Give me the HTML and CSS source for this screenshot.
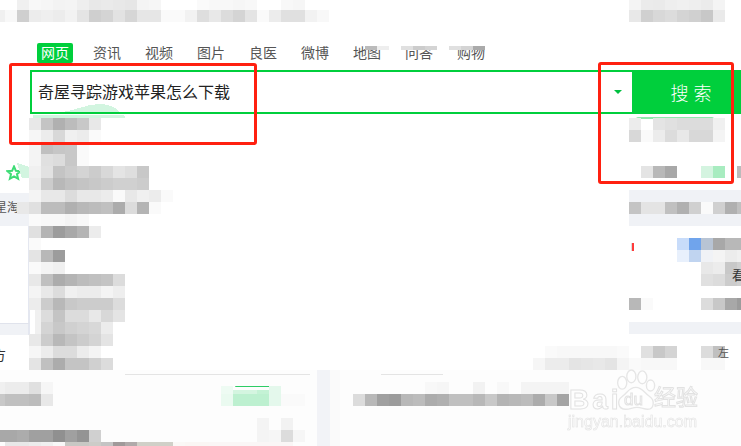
FILE: index.html
```html
<!DOCTYPE html>
<html lang="zh-CN">
<head>
  <meta charset="UTF-8">
  <title>搜索</title>
  <meta name="viewport" content="width=device-width, initial-scale=1.0">
  <link rel="stylesheet" href="styles.css">
</head>
<body>
  <div class="page">
    <nav class="tabs">
      <a class="tab active">网页</a>
      <a class="tab">资讯</a>
      <a class="tab">视频</a>
      <a class="tab">图片</a>
      <a class="tab">良医</a>
      <a class="tab">微博</a>
      <a class="tab">地图</a>
      <a class="tab">问答</a>
      <a class="tab">购物</a>
    </nav>

    <form class="search">
      <div class="query">奇屋寻踪游戏苹果怎么下载</div>
      <span class="caret"></span>
      <button class="go" type="button">搜 索</button>
    </form>

    <div class="content">
      <aside class="left">
        <svg class="star" width="16" height="16" viewBox="0 0 16 16">
          <path d="M8 1.5l1.9 4.3 4.6.4-3.5 3 1.1 4.6L8 11.4l-4.1 2.4L5 9.2l-3.5-3 4.6-.4z" fill="#fff" stroke="#3ddc75" stroke-width="2"/>
        </svg>
        <div class="strip tall">星淘</div>
        <div class="blank"></div>
        <div class="strip thin"></div>
        <div class="cut">方</div>
      </aside>
      <main class="middle"></main>
      <aside class="right">
        <div class="pill-line"></div>
        <div class="band tall"></div>
        <div class="mark"></div>
        <div class="band thin"></div>
      </aside>
    </div>

    <footer class="bottom">
      <div class="rules">
        <div class="rule first"></div>
        <div class="rule second"></div>
      </div>
      <div class="pill-line small"></div>
      <div class="column"></div>
    </footer>

    <!-- pixelated areas of the screenshot -->
    <svg class="mosaic" width="741" height="446" viewBox="0 0 741 446">
      <path d="M62 112C78 110 86 104 100 104C110 104 116 108 120 112z" fill="#d2f5e0"/>
      <path d="M33 114.500H124L125 118H33z" fill="#d2f5e0"/>
      <path d="M17 163L29 167V178L22 178z" fill="#d2f5e0"/>

      <rect class="low" x="365" y="46" fill="#bbb"/><rect class="low" x="377" y="46" fill="#eee"/>
      <rect class="low" x="401" y="46" fill="#e0e0e0"/><rect class="low" x="413" y="46" fill="#ccc"/><rect class="low" x="425" y="46" fill="#d4d4d4"/>
      <rect class="low" x="449" y="46" fill="#e0e0e0"/><rect class="low" x="461" y="46" fill="#d4d4d4"/><rect class="low" x="473" y="46" fill="#aaa"/>

      <rect x="17" y="-2" fill="#f0f0f0"/><rect x="29" y="-2" fill="#f8f8f8"/><rect x="41" y="-2" fill="#f6f6f6"/><rect x="53" y="-2" fill="#f3f3f3"/><rect x="65" y="-2" fill="#f4f4f4"/><rect x="77" y="-2" fill="#eee"/><rect x="89" y="-2" fill="#e8e8e8"/><rect x="101" y="-2" fill="#eaeaea"/><rect x="113" y="-2" fill="#e8e8e8"/><rect x="125" y="-2" fill="#e6e6e6"/><rect x="137" y="-2" fill="#f4f4f4"/><rect x="149" y="-2" fill="#f6f6f6"/><rect x="197" y="-2" fill="#fafafa"/><rect x="209" y="-2" fill="#f8f8f8"/><rect x="221" y="-2" fill="#f8f8f8"/><rect x="233" y="-2" fill="#f6f6f6"/><rect x="245" y="-2" fill="#f8f8f8"/><rect x="281" y="-2" fill="#f8f8f8"/><rect x="293" y="-2" fill="#f6f6f6"/>
      <rect x="-7" y="10" fill="#f0f0f0"/><rect x="5" y="10" fill="#f8f8f8"/><rect x="17" y="10" fill="#cfcfcf"/><rect x="29" y="10" fill="#ececec"/><rect x="41" y="10" fill="#efefef"/><rect x="53" y="10" fill="#ececec"/><rect x="65" y="10" fill="#f2f2f2"/><rect x="77" y="10" fill="#e4e4e4"/><rect x="89" y="10" fill="#cfcfcf"/><rect x="101" y="10" fill="#d4d4d4"/><rect x="113" y="10" fill="#e2e2e2"/><rect x="125" y="10" fill="#d6d6d6"/><rect x="137" y="10" fill="#e6e6e6"/><rect x="149" y="10" fill="#e6e6e6"/><rect x="161" y="10" fill="#fafafa"/><rect x="173" y="10" fill="#fafafa"/><rect x="185" y="10" fill="#f2f2f2"/><rect x="197" y="10" fill="#dedede"/><rect x="209" y="10" fill="#e8e8e8"/><rect x="221" y="10" fill="#dcdcdc"/><rect x="233" y="10" fill="#d4d4d4"/><rect x="245" y="10" fill="#e4e4e4"/><rect x="257" y="10" fill="#fafafa"/><rect x="269" y="10" fill="#ececec"/><rect x="281" y="10" fill="#e0e0e0"/><rect x="293" y="10" fill="#e0e0e0"/><rect x="305" y="10" fill="#f2f2f2"/><rect x="317" y="10" fill="#f8f8f8"/>
      <rect x="629" y="-2" fill="#f4f4f4"/><rect x="641" y="-2" fill="#ebebeb"/><rect x="653" y="-2" fill="#eaeaea"/><rect x="665" y="-2" fill="#eee"/><rect x="677" y="-2" fill="#f0f0f0"/><rect x="689" y="-2" fill="#eee"/><rect x="701" y="-2" fill="#ebebeb"/><rect x="713" y="-2" fill="#f4f4f4"/>
      <rect x="629" y="10" fill="#e8e8e8"/><rect x="641" y="10" fill="#d0d0d0"/><rect x="653" y="10" fill="#d8d8d8"/><rect x="665" y="10" fill="#dcdcdc"/><rect x="677" y="10" fill="#d4d4d4"/><rect x="689" y="10" fill="#d0d0d0"/><rect x="701" y="10" fill="#c8c8c8"/><rect x="713" y="10" fill="#eaeaea"/>

      <rect x="29" y="118" fill="#e8e8e8"/><rect x="41" y="118" fill="#c4c4c4"/><rect x="53" y="118" fill="#b0b0b0"/><rect x="65" y="118" fill="#bcbcbc"/><rect x="77" y="118" fill="#c8c8c8"/><rect x="89" y="118" fill="#e8e8e8"/>
      <rect x="29" y="130" fill="#f6f6f6"/><rect x="41" y="130" fill="#ececec"/><rect x="53" y="130" fill="#d8d8d8"/><rect x="65" y="130" fill="#f0f0f0"/><rect x="77" y="130" fill="#ececec"/><rect x="89" y="130" fill="#fafafa"/>
      <rect x="29" y="142" fill="#f4f4f4"/><rect x="41" y="142" fill="#c0c0c0"/><rect x="53" y="142" fill="#c6c6c6"/><rect x="65" y="142" fill="#c8c8c8"/><rect x="77" y="142" fill="#fafafa"/>
      <rect x="29" y="154" fill="#f4f4f4"/><rect x="41" y="154" fill="#e0e0e0"/><rect x="53" y="154" fill="#dcdcdc"/><rect x="65" y="154" fill="#c8c8c8"/><rect x="77" y="154" fill="#fafafa"/>
      <rect x="29" y="166" fill="#f0f0f0"/><rect x="41" y="166" fill="#e2e2e2"/><rect x="53" y="166" fill="#c4c4c4"/><rect x="65" y="166" fill="#ccc"/><rect x="77" y="166" fill="#d4d4d4"/><rect x="89" y="166" fill="#ccc"/><rect x="101" y="166" fill="#d8d8d8"/><rect x="113" y="166" fill="#e4e4e4"/><rect x="125" y="166" fill="#dedede"/><rect x="137" y="166" fill="#c8c8c8"/>
      <rect x="29" y="178" fill="#ececec"/><rect x="41" y="178" fill="#ccc"/><rect x="53" y="178" fill="#b8b8b8"/><rect x="65" y="178" fill="#c0c0c0"/><rect x="77" y="178" fill="#c4c4c4"/><rect x="89" y="178" fill="#c8c8c8"/><rect x="101" y="178" fill="#ccc"/><rect x="113" y="178" fill="#d0d0d0"/><rect x="125" y="178" fill="#d0d0d0"/><rect x="137" y="178" fill="#ccc"/>
      <rect x="29" y="190" fill="#f4f4f4"/><rect x="41" y="190" fill="#e8e8e8"/><rect x="53" y="190" fill="#e8e8e8"/><rect x="65" y="190" fill="#dcdcdc"/><rect x="77" y="190" fill="#e8e8e8"/><rect x="89" y="190" fill="#e8e8e8"/><rect x="101" y="190" fill="#ececec"/><rect x="113" y="190" fill="#fafafa"/><rect x="125" y="190" fill="#e8e8e8"/><rect x="137" y="190" fill="#f0f0f0"/><rect x="149" y="190" fill="#ececec"/><rect x="161" y="190" fill="#fafafa"/>
      <rect x="17" y="202" fill="#e8e8e8"/><rect x="29" y="202" fill="#e0e0e0"/><rect x="41" y="202" fill="#bcbcbc"/><rect x="53" y="202" fill="#bcbcbc"/><rect x="65" y="202" fill="#b0b0b0"/><rect x="77" y="202" fill="#b8b8b8"/><rect x="89" y="202" fill="#bcbcbc"/><rect x="101" y="202" fill="#c0c0c0"/><rect x="113" y="202" fill="#acacac"/><rect x="125" y="202" fill="#dcdcdc"/><rect x="137" y="202" fill="#b4b4b4"/><rect x="149" y="202" fill="#fafafa"/>
      <rect x="29" y="214" fill="#fafafa"/><rect x="41" y="214" fill="#f8f8f8"/><rect x="53" y="214" fill="#f8f8f8"/><rect x="65" y="214" fill="#f4f4f4"/><rect x="77" y="214" fill="#f8f8f8"/>
      <rect x="29" y="226" fill="#e0e0e0"/><rect x="41" y="226" fill="#b4b4b4"/><rect x="53" y="226" fill="#9c9c9c"/><rect x="65" y="226" fill="#a8a8a8"/><rect x="77" y="226" fill="#b4b4b4"/><rect x="89" y="226" fill="#ececec"/>
      <rect x="29" y="238" fill="#fafafa"/>
      <rect x="29" y="250" fill="#e4e4e4"/><rect x="41" y="250" fill="#b8b8b8"/><rect x="53" y="250" fill="#9c9c9c"/>
      <rect x="29" y="262" fill="#fafafa"/><rect x="41" y="262" fill="#f4f4f4"/><rect x="53" y="262" fill="#f0f0f0"/>
      <rect x="29" y="274" fill="#e8e8e8"/><rect x="41" y="274" fill="#c0c0c0"/><rect x="53" y="274" fill="#acacac"/><rect x="65" y="274" fill="#b4b4b4"/><rect x="77" y="274" fill="#bcbcbc"/><rect x="89" y="274" fill="#c0c0c0"/><rect x="101" y="274" fill="#c4c4c4"/><rect x="113" y="274" fill="#dcdcdc"/>
      <rect x="29" y="286" fill="#f4f4f4"/><rect x="41" y="286" fill="#e8e8e8"/><rect x="53" y="286" fill="#dcdcdc"/><rect x="65" y="286" fill="#f0f0f0"/><rect x="77" y="286" fill="#ececec"/><rect x="89" y="286" fill="#ececec"/><rect x="101" y="286" fill="#f4f4f4"/><rect x="113" y="286" fill="#eee"/>
      <rect x="29" y="298" fill="#ececec"/><rect x="41" y="298" fill="#ccc"/><rect x="53" y="298" fill="#b8b8b8"/><rect x="65" y="298" fill="#c8c8c8"/><rect x="77" y="298" fill="#ccc"/><rect x="89" y="298" fill="#ccc"/><rect x="101" y="298" fill="#ccc"/><rect x="113" y="298" fill="#dcdcdc"/>
      <rect x="35" y="310" fill="#f0f0f0"/><rect x="41" y="310" fill="#dcdcdc"/><rect x="53" y="310" fill="#c4c4c4"/><rect x="65" y="310" fill="#dcdcdc"/><rect x="77" y="310" fill="#dcdcdc"/><rect x="89" y="310" fill="#e8e8e8"/><rect x="101" y="310" fill="#d8d8d8"/><rect x="113" y="310" fill="#e4e4e4"/>
      <rect x="35" y="322" fill="#f0f0f0"/><rect x="41" y="322" fill="#d4d4d4"/><rect x="53" y="322" fill="#c8c8c8"/><rect x="65" y="322" fill="#d0d0d0"/><rect x="77" y="322" fill="#d4d4d4"/><rect x="89" y="322" fill="#d8d8d8"/><rect x="101" y="322" fill="#ececec"/>
      <rect x="29" y="334" fill="#e8e8e8"/><rect x="41" y="334" fill="#ccc"/><rect x="53" y="334" fill="#b8b8b8"/><rect x="65" y="334" fill="#c4c4c4"/><rect x="77" y="334" fill="#ccc"/><rect x="89" y="334" fill="#d4d4d4"/><rect x="101" y="334" fill="#e4e4e4"/>
      <rect x="29" y="346" fill="#f6f6f6"/><rect x="41" y="346" fill="#ececec"/><rect x="53" y="346" fill="#dcdcdc"/><rect x="65" y="346" fill="#dcdcdc"/><rect x="77" y="346" fill="#ececec"/><rect x="89" y="346" fill="#f4f4f4"/>
      <rect x="29" y="358" fill="#e4e4e4"/><rect x="41" y="358" fill="#c0c0c0"/><rect x="53" y="358" fill="#acacac"/><rect x="65" y="358" fill="#c4c4c4"/><rect x="77" y="358" fill="#c4c4c4"/><rect x="89" y="358" fill="#d0d0d0"/><rect x="101" y="358" fill="#dcdcdc"/>

      <rect x="-7" y="382" fill="#f0f0f0"/><rect x="5" y="382" fill="#ececec"/><rect x="17" y="382" fill="#ececec"/><rect x="29" y="382" fill="#e0e0e0"/><rect x="41" y="382" fill="#f6f6f6"/>
      <rect x="-7" y="394" fill="#c8c8c8"/><rect x="5" y="394" fill="#c0c0c0"/><rect x="17" y="394" fill="#c0c0c0"/><rect x="29" y="394" fill="#bcbcbc"/><rect x="41" y="394" fill="#e8e8e8"/>
      <rect x="221" y="386" fill="#eefbf3"/><rect x="233" y="390" fill="#d4f5e0"/><rect x="245" y="390" fill="#d4f5e0"/><rect x="257" y="390" fill="#c4f2d5"/><rect x="269" y="386" fill="#e4f8ec"/>
      <rect x="221" y="394" fill="#eafaf0"/><rect x="233" y="394" fill="#bdf0d0"/><rect x="245" y="394" fill="#bdf0d0"/><rect x="257" y="394" fill="#bdf0d0"/><rect x="269" y="394" fill="#e4f8ec"/><rect x="281" y="394" fill="#fafafa"/><rect x="293" y="394" fill="#fafafa"/>
      <rect x="257" y="418" fill="#f4f4f4"/><rect x="281" y="418" fill="#f2f2f2"/>
      <rect x="257" y="430" fill="#f4f4f4"/><rect x="269" y="430" fill="#f6f6f6"/><rect x="281" y="430" fill="#dcdcdc"/><rect x="293" y="430" fill="#f6f6f6"/>
      <rect x="-7" y="430" fill="#a8a8a8"/><rect x="5" y="430" fill="#a8a8a8"/><rect x="17" y="430" fill="#acacac"/><rect x="29" y="430" fill="#a0a0a0"/><rect x="41" y="430" fill="#a0a0a0"/><rect x="53" y="430" fill="#909090"/><rect x="65" y="430" fill="#a0a0a0"/><rect x="77" y="430" fill="#949494"/><rect x="89" y="430" fill="#d0d0d0"/>
      <rect x="5" y="442" fill="#e8e8e8"/><rect x="17" y="442" fill="#e8e8e8"/><rect x="29" y="442" fill="#ececec"/><rect x="41" y="442" fill="#f0f0f0"/><rect x="53" y="442" fill="#f8f8f8"/><rect x="65" y="442" fill="#c8c8c4"/><rect x="77" y="442" fill="#c8c8c4"/><rect x="89" y="442" fill="#ccccc8"/><rect x="101" y="442" fill="#c4c4c4"/><rect x="113" y="442" fill="#a09a9a"/><rect x="125" y="442" fill="#b0aaaa"/><rect x="137" y="442" fill="#d0d0c8"/><rect x="149" y="442" fill="#d0d0c8"/><rect x="161" y="442" fill="#d0d0c8"/><rect x="173" y="442" fill="#faf8f6"/><rect x="185" y="442" fill="#faf6f4"/><rect x="197" y="442" fill="#faf6f4"/><rect x="209" y="442" fill="#faf6f6"/><rect x="221" y="442" fill="#faf6f6"/><rect x="233" y="442" fill="#faf6f6"/><rect x="245" y="442" fill="#faf6f6"/><rect x="257" y="442" fill="#faf6f6"/><rect x="269" y="442" fill="#faf6f6"/><rect x="281" y="442" fill="#faf6f6"/>

      <rect x="353" y="394" fill="#dcdcdc"/><rect x="365" y="394" fill="#b8b8b8"/><rect x="377" y="394" fill="#a0a0a0"/><rect x="389" y="394" fill="#9c9c9c"/><rect x="401" y="394" fill="#b8b8b8"/><rect x="413" y="394" fill="#bcbcbc"/><rect x="425" y="394" fill="#acacac"/><rect x="437" y="394" fill="#b0b0b0"/><rect x="449" y="394" fill="#c0c0c0"/><rect x="461" y="394" fill="#c0c0c0"/><rect x="473" y="394" fill="#b8b8b8"/><rect x="485" y="394" fill="#c8c8c8"/><rect x="497" y="394" fill="#b4b4b4"/><rect x="509" y="394" fill="#b8b8b8"/><rect x="521" y="394" fill="#bcbcbc"/><rect x="533" y="394" fill="#acacac"/><rect x="545" y="394" fill="#c8c8c8"/><rect x="557" y="394" fill="#a4a4a4"/>
      <rect x="425" y="382" fill="#f8f8f8"/><rect x="437" y="382" fill="#f6f6f6"/><rect x="473" y="382" fill="#f2f2f2"/><rect x="497" y="382" fill="#f8f8f8"/><rect x="521" y="382" fill="#f4f4f4"/><rect x="533" y="382" fill="#f4f4f4"/><rect x="545" y="382" fill="#f4f4f4"/><rect x="557" y="382" fill="#f4f4f4"/>

      <rect x="545" y="346" fill="#fafafa"/><rect x="557" y="346" fill="#f8f8f8"/><rect x="569" y="346" fill="#f8f8f8"/><rect x="581" y="346" fill="#f8f8f8"/><rect x="593" y="346" fill="#f8f8f8"/><rect x="605" y="346" fill="#f8f8f8"/><rect x="617" y="346" fill="#fafafa"/><rect x="641" y="346" fill="#e0e0e0"/><rect x="653" y="346" fill="#c8c8c8"/><rect x="665" y="346" fill="#d4d4d4"/><rect x="701" y="346" fill="#dcdcdc"/><rect x="713" y="346" fill="#c0c0c0"/>
      <rect x="533" y="358" fill="#f6f6f6"/><rect x="545" y="358" fill="#ececec"/><rect x="557" y="358" fill="#ececec"/><rect x="569" y="358" fill="#e4e4e4"/><rect x="581" y="358" fill="#e6e6e6"/><rect x="593" y="358" fill="#e8e8e8"/><rect x="605" y="358" fill="#e4e4e4"/><rect x="617" y="358" fill="#f4f4f4"/><rect x="629" y="358" fill="#fafafa"/><rect x="641" y="358" fill="#f8f8f8"/><rect x="653" y="358" fill="#f8f8f8"/><rect x="665" y="358" fill="#f8f8f8"/><rect x="701" y="358" fill="#f8f8f8"/><rect x="713" y="358" fill="#f8f8f8"/>

      <rect x="629" y="118" fill="#ececec"/><rect x="653" y="118" fill="#e4e4e4"/><rect x="665" y="118" fill="#e0e0e0"/><rect x="677" y="118" fill="#dcdcdc"/><rect x="689" y="118" fill="#dcdcdc"/><rect x="701" y="118" fill="#dcdcdc"/><rect x="713" y="118" fill="#f0f0f0"/>
      <rect x="629" y="130" fill="#d8d8d8"/><rect x="641" y="130" fill="#fafafa"/><rect x="653" y="130" fill="#ececec"/><rect x="665" y="130" fill="#dcdcdc"/><rect x="677" y="130" fill="#e8e8e8"/><rect x="689" y="130" fill="#d8d8d8"/><rect x="701" y="130" fill="#d8d8d8"/><rect x="713" y="130" fill="#f4f4f4"/>
      <rect x="641" y="166" fill="#e4e4e4"/><rect x="653" y="166" fill="#b8b8b8"/><rect x="665" y="166" fill="#a8a8a8"/><rect x="701" y="166" fill="#d4f4e0"/><rect x="713" y="166" fill="#a8ecc0"/><rect x="737" y="166" fill="#bbb"/>
      <rect x="629" y="202" fill="#c4c4c4"/><rect x="641" y="202" fill="#e4e4e4"/><rect x="653" y="202" fill="#e4e4e4"/><rect x="665" y="202" fill="#c0c0c0"/><rect x="677" y="202" fill="#b0b0b0"/><rect x="689" y="202" fill="#d0d0d0"/><rect x="701" y="202" fill="#fafafa"/><rect x="713" y="202" fill="#d0d0d0"/><rect x="725" y="202" fill="#b0b0b0"/><rect x="737" y="202" fill="#c0c0c0"/>

      <rect x="677" y="238" fill="#c8dcfa"/><rect x="689" y="238" fill="#70a4ec"/><rect x="701" y="238" fill="#b8c4d4"/><rect x="713" y="238" fill="#a8a8a8"/><rect x="725" y="238" fill="#b8b8b8"/><rect x="737" y="238" fill="#b8b8b8"/>
      <rect x="677" y="250" fill="#e8f0fc"/><rect x="689" y="250" fill="#c0d4f0"/><rect x="701" y="250" fill="#f0f2f6"/><rect x="713" y="250" fill="#f4f4f4"/><rect x="725" y="250" fill="#ececec"/><rect x="737" y="250" fill="#f0f0f0"/>
      <rect x="701" y="262" fill="#e8e8e8"/><rect x="713" y="262" fill="#ececec"/><rect x="725" y="262" fill="#c8c8c8"/><rect x="737" y="262" fill="#d0d0d0"/>
      <rect x="701" y="274" fill="#e0e0e0"/><rect x="713" y="274" fill="#dcdcdc"/><rect x="725" y="274" fill="#ccc"/><rect x="737" y="274" fill="#d0d0d0"/>
      <rect x="629" y="298" fill="#b8b8b8"/><rect x="641" y="298" fill="#fafafa"/><rect x="701" y="298" fill="#dcdcdc"/><rect x="713" y="298" fill="#c8c8c8"/><rect x="725" y="298" fill="#a8a8a8"/><rect x="737" y="298" fill="#9c9c9c"/>
    </svg>

    <span class="scrap kan">看</span>
    <span class="scrap zuo">左</span>

    <!-- annotation boxes -->
    <div class="redbox one"></div>
    <div class="redbox two"></div>

    <!-- watermark -->
    <div class="wm">
      <svg class="paw" width="42" height="46" viewBox="0 0 46 46">
        <g fill="#fff" fill-opacity="0.5" stroke="#e6e6e6" stroke-width="1.500">
          <ellipse cx="9" cy="14" rx="5" ry="7"/>
          <ellipse cx="19" cy="7" rx="5" ry="7"/>
          <ellipse cx="31" cy="8" rx="5" ry="7"/>
          <ellipse cx="40" cy="17" rx="4.500" ry="6"/>
          <path d="M24 19C16 19 15 25 9 29C3 33 4 43 13 43C18 43 20 41 25 41C31 41 32 43 37 43C44 43 45 33 39 29C33 25 31 19 24 19z"/>
        </g>
      </svg>
      <span class="wm-bai">Bai</span>
      <span class="wm-du">du</span>
      <span class="wm-jy">经验</span>
      <span class="wm-url">jingyan.baidu.com</span>
    </div>
  </div>
</body>
</html>
```

FILE: styles.css
```css
html, body {
  margin: 0;
  padding: 0;
}
body {
  background: #fff;
  font-family: "Liberation Sans", "Noto Sans CJK SC", sans-serif;
  color: #333;
}
.page {
  position: relative;
  width: 741px;
  height: 446px;
  padding-top: 43px;
  box-sizing: border-box;
  overflow: hidden;
}

/* tabs */
.tabs {
  display: flex;
  height: 20px;
  padding-left: 37px;
  margin-bottom: 7px;
}
.tab {
  width: 36px;
  margin-right: 16px;
  font-size: 14px;
  line-height: 20px;
  text-align: center;
  color: #555;
}
.tab.active {
  background: #00cf3c;
  color: #fff;
  border-radius: 2px;
}

/* search box */
.search {
  display: flex;
  align-items: stretch;
  height: 44px;
  margin-left: 30px;
  border: 2px solid #00cf3c;
  border-right: 0;
  box-sizing: border-box;
}
.query {
  flex: 1;
  padding-left: 6px;
  font-size: 16px;
  line-height: 41px;
  color: #222;
}
.caret {
  width: 0;
  height: 0;
  align-self: center;
  margin-right: 10px;
  border-left: 4px solid transparent;
  border-right: 4px solid transparent;
  border-top: 4px solid #00c040;
}
.go {
  width: 109px;
  margin: -2px 0;
  padding: 0 0 0 9px;
  border: none;
  background: #00cf3c;
  color: #fff;
  font-family: inherit;
  font-size: 18px;
  font-weight: 300;
}

/* page body */
.content {
  display: flex;
  height: 256px;
}
.left {
  width: 30px;
  display: flex;
  flex-direction: column;
}
.star {
  margin: 51px 0 0 6px;
  flex: none;
}
.strip {
  background: #f0f2f6;
  flex: none;
}
.strip.tall {
  height: 33px;
  margin-top: 12px;
  padding-top: 8px;
  box-sizing: border-box;
  margin-left: -5px;
  font-size: 12px;
  line-height: 14px;
  white-space: nowrap;
  overflow: hidden;
  color: #555;
}
.blank {
  height: 97px;
  flex: none;
  border-right: 2px solid #e4e7f0;
}
.strip.thin {
  height: 11px;
  border-top: 1px solid #e0e3ec;
  border-right: 2px solid #e4e7f0;
}
.cut {
  margin: 13px 0 0 -8px;
  font-size: 14px;
  line-height: 14px;
  color: #333;
}
.middle {
  flex: 1;
}
.right {
  width: 112px;
  display: flex;
  flex-direction: column;
  box-sizing: border-box;
  padding-top: 3px;
}
.pill-line {
  height: 2px;
  margin: 0 27px 0 7px;
  background: #8ee8ac;
  border-radius: 2px 2px 0 0;
}
.band {
  background: #f0f2f6;
  flex: none;
}
.band.tall {
  height: 36px;
  margin-top: 71px;
}
.band.thin {
  height: 12px;
  margin-top: 71px;
}
.mark {
  width: 2px;
  height: 8px;
  margin: 17px 0 0 2px;
  background: #ff3b3b;
  border-left: 1px solid #ddd;
}

/* bottom band */
.bottom {
  position: relative;
  height: 76px;
  background: #fdfdfd;
  display: flex;
  flex-direction: column;
}
.rules {
  display: flex;
  margin-top: 4px;
}
.rule {
  height: 1px;
  background: #e4e4e4;
}
.rule.first {
  width: 185px;
  margin-left: 125px;
}
.rule.second {
  width: 62px;
  margin-left: 71px;
}
.pill-line.small {
  width: 38px;
  height: 1px;
  margin: 11px 0 0 235px;
  background: #2ecc66;
}
.column {
  position: absolute;
  left: 317px;
  top: 0;
  bottom: 0;
  width: 13px;
  background: #f2f3f7;
  border-right: 10px solid #fafafa;
}

/* overlays */
.mosaic {
  position: absolute;
  left: 0;
  top: 0;
  shape-rendering: crispEdges;
}
.mosaic rect {
  width: 12px;
  height: 12px;
}
.mosaic rect.low {
  height: 4px;
}
.scrap {
  position: absolute;
  font-size: 13px;
  line-height: 14px;
  color: #333;
}
.kan {
  left: 732px;
  top: 269px;
}
.zuo {
  left: 718px;
  top: 346px;
  font-size: 11px;
  color: #555;
}
.redbox {
  position: absolute;
  box-sizing: border-box;
  border: 3px solid #ff2010;
  border-radius: 3px;
}
.redbox.one {
  left: 9px;
  top: 63px;
  width: 248px;
  height: 82px;
}
.redbox.two {
  left: 598px;
  top: 62px;
  width: 136px;
  height: 122px;
}

/* watermark */
.wm {
  position: absolute;
  left: 560px;
  top: 360px;
  width: 181px;
  height: 86px;
  filter: blur(0.5px);
}
.paw {
  position: absolute;
  left: 54px;
  top: 8px;
}
.wm-bai, .wm-du, .wm-jy, .wm-url {
  position: absolute;
  white-space: nowrap;
  color: rgba(255,255,255,0.5);
  -webkit-text-stroke: 1px #e2e2e2;
}
.wm-bai {
  left: 9px;
  top: 26px;
  font-size: 28px;
  line-height: 28px;
  font-weight: 700;
  letter-spacing: 3px;
}
.wm-du {
  left: 64px;
  top: 31px;
  font-size: 17px;
  line-height: 18px;
}
.wm-jy {
  left: 94px;
  top: 26px;
  font-size: 22px;
  line-height: 24px;
}
.wm-url {
  left: 8px;
  top: 53px;
  font-size: 16px;
  line-height: 18px;
  -webkit-text-stroke: 0.6px #e2e2e2;
}
```
